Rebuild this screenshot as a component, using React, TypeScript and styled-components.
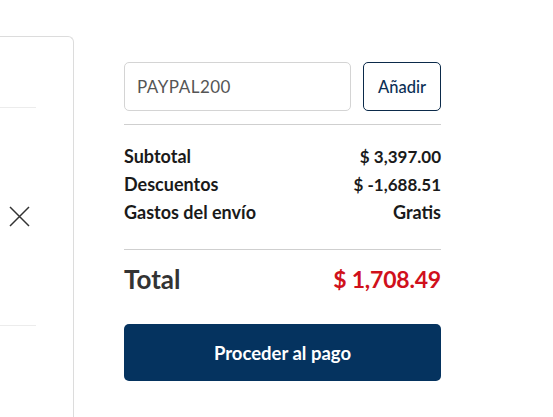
import React from "react";
import styled, { createGlobalStyle } from "styled-components";

const GlobalStyle = createGlobalStyle`
  html, body { margin: 0; padding: 0; background: #ffffff; }
  body { font-family: "Lato", "Liberation Sans", sans-serif; }
  * { box-sizing: border-box; }
`;

const Page = styled.div`
  display: flex;
  align-items: flex-start;
  padding-top: 36px;
  width: 553px;
  height: 417px;
  overflow: hidden;
`;

const ItemCard = styled.div`
  width: 74px;
  height: 381px;
  border-top: 1px solid #dcdcdc;
  border-right: 1px solid #dcdcdc;
  border-top-right-radius: 6px;
  display: flex;
  flex-direction: column;
  padding-top: 70px;
`;

const ItemRule = styled.div`
  width: 36px;
  height: 1px;
  background: #ececec;
`;

const ItemBody = styled.div`
  height: 217px;
  display: flex;
  align-items: center;
  padding-left: 9px;
`;

const RemoveButton = styled.button`
  border: 0;
  background: none;
  padding: 0;
  width: 21px;
  height: 21px;
  display: flex;
  align-items: center;
  justify-content: center;
  cursor: pointer;
`;

const Summary = styled.div`
  margin-left: 50px;
  width: 317px;
  padding-top: 26px;
  display: flex;
  flex-direction: column;
`;

const CouponRow = styled.div`
  display: flex;
  gap: 12px;
  height: 49px;
`;

const CouponInput = styled.input`
  width: 227px;
  height: 49px;
  border: 1px solid #d4d4d4;
  border-radius: 5px;
  padding: 0 12px;
  font-family: "Lato", "Liberation Sans", sans-serif;
  font-size: 17px;
  color: #555555;
  letter-spacing: 0.5px;
  outline: none;
`;

const OutlineButton = styled.button`
  width: 78px;
  height: 49px;
  border: 1px solid #0b2a4a;
  border-radius: 5px;
  background: #ffffff;
  color: #0b2f55;
  font-family: "Lato", "Liberation Sans", sans-serif;
  font-size: 16.5px;
  font-weight: 500;
  cursor: pointer;
`;

const Divider = styled.div<{ $top: number }>`
  height: 1px;
  background: #cfcfcf;
  margin-top: ${(p) => p.$top}px;
`;

const Rows = styled.div`
  padding-top: 17px;
  display: flex;
  flex-direction: column;
`;

const Row = styled.div`
  display: flex;
  justify-content: space-between;
  align-items: center;
  height: 28px;
  font-size: 18px;
  font-weight: 700;
  color: #1a1a1a;
`;

const Amount = styled.span`
  font-size: 17px;
`;

const TotalRow = styled.div`
  display: flex;
  justify-content: space-between;
  align-items: center;
  height: 36px;
  margin-top: 11px;
  font-weight: 700;
`;

const TotalLabel = styled.span`
  font-size: 26px;
  color: #333333;
`;

const TotalValue = styled.span`
  font-size: 23px;
  letter-spacing: -0.2px;
  color: #d0101b;
`;

const PrimaryButton = styled.button`
  margin-top: 27px;
  height: 57px;
  width: 100%;
  border: 0;
  border-radius: 5px;
  background: #05335f;
  color: #ffffff;
  font-family: "Lato", "Liberation Sans", sans-serif;
  font-size: 18.5px;
  font-weight: 700;
  cursor: pointer;
`;

export default function App() {
  return (
    <>
      <GlobalStyle />
      <Page>
        <ItemCard>
          <ItemRule />
          <ItemBody>
            <RemoveButton aria-label="Eliminar">
              <svg width="21" height="21" viewBox="0 0 21 21">
                <path d="M1 1 L20 20 M20 1 L1 20" stroke="#333" strokeWidth="1.5" fill="none" />
              </svg>
            </RemoveButton>
          </ItemBody>
          <ItemRule />
        </ItemCard>
        <Summary>
          <CouponRow>
            <CouponInput defaultValue="PAYPAL200" />
            <OutlineButton>Añadir</OutlineButton>
          </CouponRow>
          <Divider $top={13} />
          <Rows>
            <Row><span>Subtotal</span><Amount>$ 3,397.00</Amount></Row>
            <Row><span>Descuentos</span><Amount>$ -1,688.51</Amount></Row>
            <Row><span>Gastos del envío</span><span>Gratis</span></Row>
          </Rows>
          <Divider $top={23} />
          <TotalRow>
            <TotalLabel>Total</TotalLabel>
            <TotalValue>$ 1,708.49</TotalValue>
          </TotalRow>
          <PrimaryButton>Proceder al pago</PrimaryButton>
        </Summary>
      </Page>
    </>
  );
}
